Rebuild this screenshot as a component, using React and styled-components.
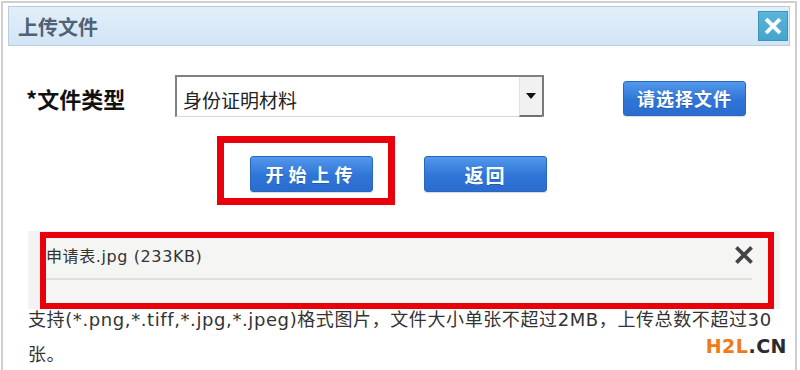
import React from "react";
import styled, { createGlobalStyle } from "styled-components";

const GlobalStyle = createGlobalStyle`
  html, body {
    margin: 0;
    padding: 0;
    background: #ffffff;
  }
  body {
    font-family: "DejaVu Sans", "Noto Sans CJK SC", sans-serif;
  }
`;

const Page = styled.div`
  position: relative;
  width: 800px;
  height: 370px;
  overflow: hidden;
  background: #fff;
`;

const Dialog = styled.div`
  margin: 1px 0 0 1px;
  width: 796px;
  height: 400px;
  border-top: 2px solid #cfcfcf;
  border-left: 2px solid #cfcfcf;
  border-right: 2px solid #cfcfcf;
  box-sizing: border-box;
  padding: 3px 5px 0 5px;
`;

const TitleBar = styled.div`
  height: 40px;
  box-sizing: border-box;
  border: 1px solid #b9cde0;
  background: linear-gradient(to bottom, #e2effa, #d2e5f6);
  display: flex;
  align-items: center;
  justify-content: space-between;
  padding: 0 1px 0 9px;
`;

const Title = styled.div`
  font-family: "Noto Sans CJK SC", sans-serif;
  font-weight: 700;
  font-size: 20px;
  color: #4e6373;
`;

const CloseBtn = styled.div`
  width: 30px;
  height: 30px;
  box-sizing: border-box;
  border: 1px solid #3d93b8;
  background: linear-gradient(to bottom, #5ab6da, #44a4cc);
  display: flex;
  align-items: center;
  justify-content: center;
`;

const Row = styled.div`
  display: flex;
  align-items: center;
`;

const TypeRow = styled(Row)`
  margin-top: 29px;
  padding-left: 18px;
  height: 42px;
`;

const Label = styled.div`
  width: 149px;
  font-family: "Noto Sans CJK SC", sans-serif;
  font-weight: 700;
  font-size: 22px;
  color: #111;
  padding-top: 4px;
`;

const Select = styled.div`
  width: 369px;
  height: 42px;
  box-sizing: border-box;
  border-top: 2px solid #808080;
  border-left: 2px solid #808080;
  border-right: 2px solid #7a7a7a;
  border-bottom: 1px solid #d8d8d8;
  display: flex;
  align-items: stretch;
`;

const SelectText = styled.div`
  flex: 1;
  display: flex;
  align-items: center;
  padding: 6px 0 0 6px;
  font-family: "Noto Sans CJK SC", sans-serif;
  font-size: 19px;
  color: #222;
`;

const Arrow = styled.div`
  width: 22px;
  margin-bottom: -1px;
  background: #f1f1f1;
  border-left: 1px solid #e0e0e0;
  border-bottom: 2px solid #707070;
  display: flex;
  align-items: center;
  justify-content: center;
`;

const Button = styled.div`
  width: ${(p) => p.$w || 123}px;
  height: ${(p) => p.$h || 36}px;
  box-sizing: border-box;
  border: 1px solid #2b66bd;
  border-radius: 3px;
  background: linear-gradient(to bottom, #5298ec, #2f75d6 55%, #2a6cd0);
  box-shadow: 0 1px 1px rgba(0, 0, 0, 0.15);
  display: flex;
  align-items: center;
  justify-content: center;
  font-family: "Noto Sans CJK SC", sans-serif;
  font-weight: 700;
  font-size: ${(p) => p.$fs || 17}px;
  letter-spacing: ${(p) => p.$ls || 0}px;
  color: #fff;
  text-shadow: 0 1px 0 rgba(0, 0, 0, 0.2);
`;

const ChooseBtn = styled(Button)`
  margin-left: 79px;
  margin-top: 4px;
`;

const ActionRow = styled(Row)`
  margin-top: 19px;
  padding-left: 209px;
  align-items: flex-start;
`;

const Highlight = styled.div`
  border: 7px solid #e8000b;
  box-sizing: border-box;
`;

const UploadBox = styled(Highlight)`
  width: 178px;
  height: 69px;
  padding: 13px 0 0 26px;
`;

const BackBtn = styled(Button)`
  margin-left: 29px;
  margin-top: 20px;
`;

const FileArea = styled.div`
  margin: 26px 0 0 20px;
  width: 752px;
  background: #f3f3f1;
  padding: 1px 0 0 12px;
  box-sizing: border-box;
`;

const FileBox = styled(Highlight)`
  border-width: 6px;
  width: 734px;
  height: 77px;
  padding: 3px 14px 0 0;
  background: #f5f5f3;
`;

const FileRow = styled(Row)`
  justify-content: space-between;
  height: 28px;
`;

const FileName = styled.div`
  font-size: 16px;
  letter-spacing: 0.6px;
  color: #333;
`;

const FileLine = styled.div`
  margin-top: 9px;
  height: 2px;
  background: #dfdfdd;
  margin-right: 2px;
`;

const Note = styled.div`
  margin: -7px 0 0 20px;
  width: 752px;
  font-size: 18px;
  letter-spacing: 0.6px;
  line-height: 35px;
  color: #333;
`;

const Watermark = styled.div`
  position: absolute;
  right: 13px;
  bottom: 14px;
  font-family: "DejaVu Sans", sans-serif;
  font-weight: 700;
  font-size: 19px;
  line-height: 19px;
  letter-spacing: 0.5px;
  color: #2b2b2b;
`;

const Orange = styled.span`
  color: #f07a16;
`;

const CrossIcon = ({ size, color, stroke }) => (
  <svg width={size} height={size} viewBox="0 0 16 16">
    <path
      d="M3 3 L13 13 M13 3 L3 13"
      stroke={color}
      strokeWidth={stroke}
      strokeLinecap="square"
    />
  </svg>
);

export default function App() {
  return (
    <Page>
      <GlobalStyle />
      <Dialog>
        <TitleBar>
          <Title>上传文件</Title>
          <CloseBtn>
            <CrossIcon size={18} color="#fff" stroke={3.4} />
          </CloseBtn>
        </TitleBar>

        <TypeRow>
          <Label>*文件类型</Label>
          <Select>
            <SelectText>身份证明材料</SelectText>
            <Arrow>
              <svg width="10" height="6" viewBox="0 0 10 6">
                <path d="M0 0 L10 0 L5 6 Z" fill="#111" />
              </svg>
            </Arrow>
          </Select>
          <ChooseBtn $w={123} $h={35} $fs={18} $ls={1}>
            请选择文件
          </ChooseBtn>
        </TypeRow>

        <ActionRow>
          <UploadBox>
            <Button $fs={18} $ls={5}>
              开始上传
            </Button>
          </UploadBox>
          <BackBtn $fs={19} $ls={2}>
            返回
          </BackBtn>
        </ActionRow>

        <FileArea>
          <FileBox>
            <FileRow>
              <FileName>申请表.jpg (233KB)</FileName>
              <CrossIcon size={20} color="#444" stroke={3} />
            </FileRow>
            <FileLine />
          </FileBox>
        </FileArea>

        <Note>
          支持(*.png,*.tiff,*.jpg,*.jpeg)格式图片，文件大小单张不超过2MB，上传总数不超过30张。
        </Note>
      </Dialog>
      <Watermark>
        <Orange>H2L</Orange>.CN
      </Watermark>
    </Page>
  );
}
